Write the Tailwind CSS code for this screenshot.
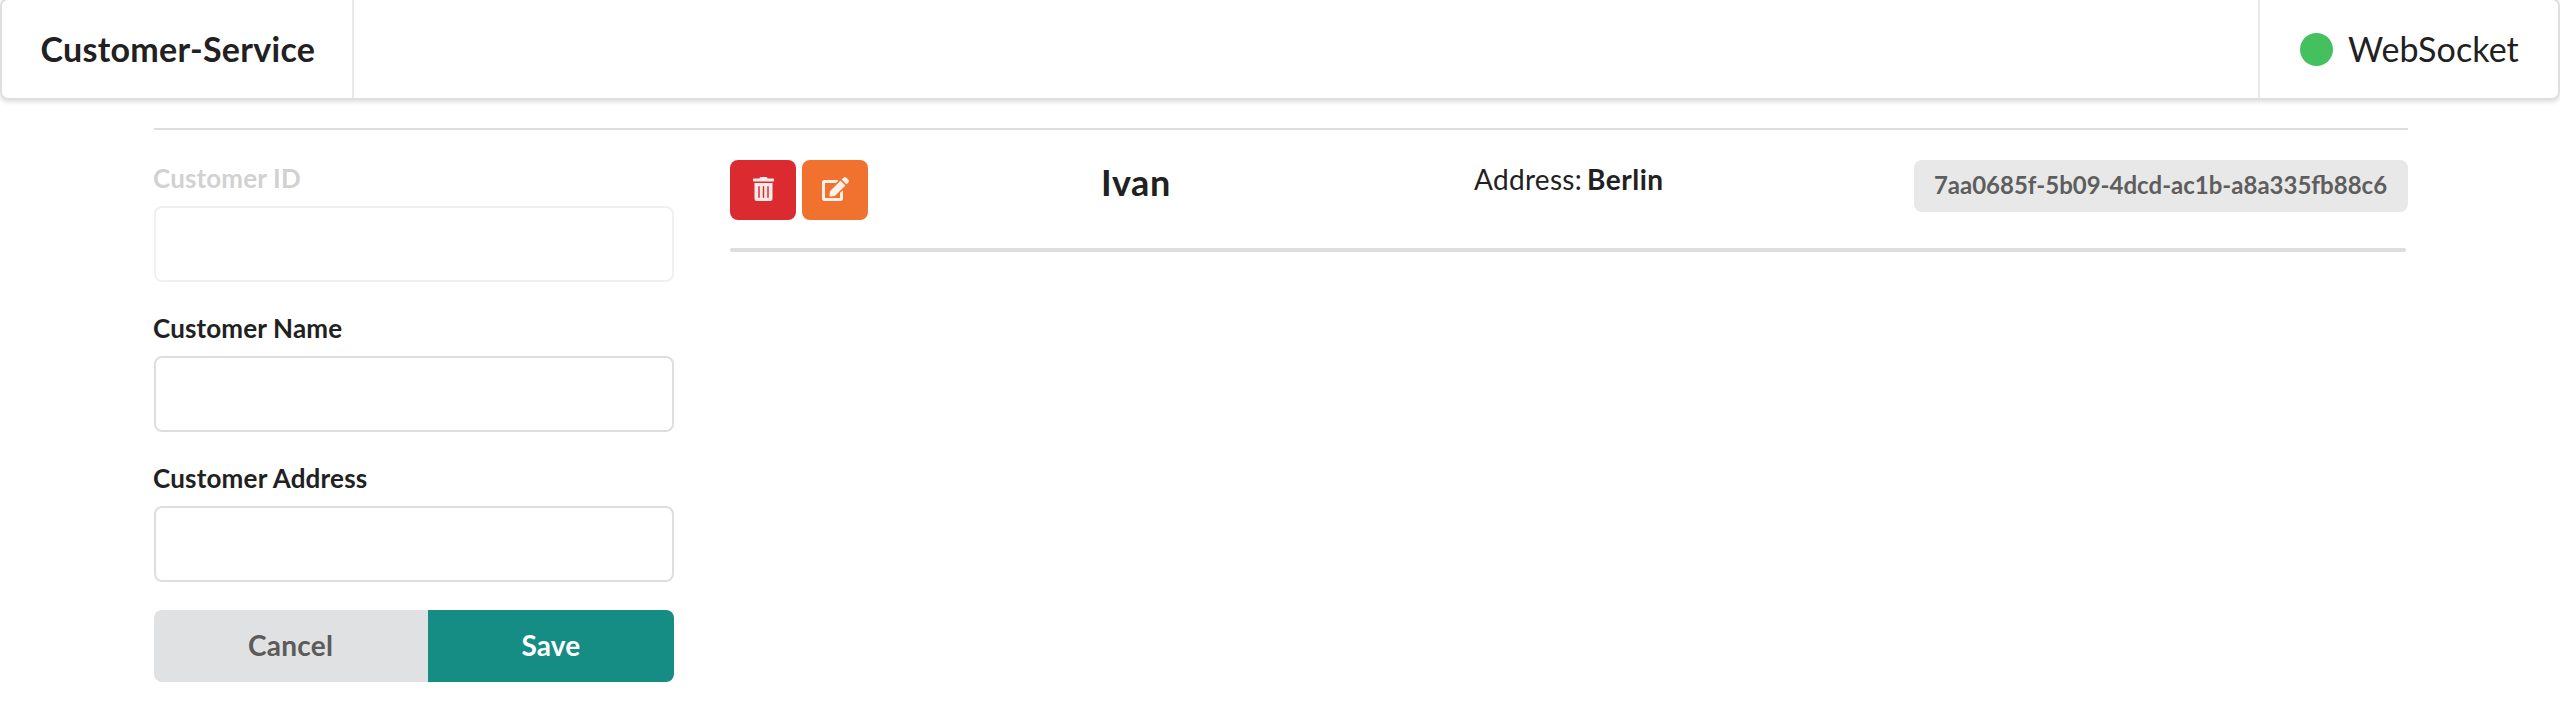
<!DOCTYPE html>
<html lang="en">
<head>
<meta charset="utf-8">
<title>Customer-Service</title>
<script src="https://cdn.jsdelivr.net/npm/@tailwindcss/browser@4"></script>
</head>
<body class="h-[712px] overflow-hidden bg-white font-['Lato',sans-serif] text-[28px] leading-[40px] text-[#212121]">
  <nav class="-mt-0.5 flex h-[102px] rounded-lg border-2 border-[#dededf] shadow-[0_2px_4px_0_rgba(34,36,38,0.15)]">
    <div class="flex w-[352px] items-center border-r-2 border-[#e9e9e9] pl-[38.5px] text-[34px] font-bold tracking-[0.27px]">Customer-Service</div>
    <div class="ml-auto flex w-[300px] items-center border-l-2 border-[#e9e9e9] pl-[39.5px] text-[34px]">
      <span class="mt-px mr-[15.5px] size-[33px] rounded-full bg-[#44c15e]"></span><span class="tracking-[0.1px]">WebSocket</span>
    </div>
  </nav>

  <main class="mt-7 ml-[154px] w-[2254px] border-t-2 border-[#dddddd]">
    <div class="flex pt-[30px]">
      <form class="w-[520px] text-[26px] font-bold tracking-[0.15px]">
        <label class="block opacity-45">
          <span class="-ml-px block h-[46px] leading-[36px]"><span class="opacity-45">Customer ID</span></span>
          <input disabled class="block h-[76px] w-full rounded-lg border-2 border-[#dededf]">
        </label>
        <label class="mt-7 block">
          <span class="-ml-px block h-[46px] leading-[36px]">Customer Name</span>
          <input class="block h-[76px] w-full rounded-lg border-2 border-[#dededf]">
        </label>
        <label class="mt-7 block">
          <span class="-ml-px block h-[46px] leading-[36px] tracking-[0.2px]">Customer Address</span>
          <input class="block h-[76px] w-full rounded-lg border-2 border-[#dededf]">
        </label>
        <div class="mt-7 flex h-[72px] overflow-hidden rounded-lg text-[28px]">
          <button type="button" class="w-[274px] bg-[#e0e1e2] pr-px pb-0.5 tracking-[0.25px] text-[#5b5b5b]">Cancel</button>
          <button type="button" class="flex-1 bg-[#158c84] pb-0.5 text-white">Save</button>
        </div>
      </form>

      <section class="ml-14 flex-1">
        <div class="flex h-[88px] items-start">
          <div class="flex w-[373px] gap-1.5">
            <button type="button" aria-label="Delete" class="flex h-[60px] w-[66px] items-center justify-center rounded-lg bg-[#db2b30] pb-0.5">
              <svg class="h-6 w-[21px] fill-white/90" viewBox="0 0 448 512"><path d="M32 464a48 48 0 0 0 48 48h288a48 48 0 0 0 48-48V128H32zm272-256a16 16 0 0 1 32 0v224a16 16 0 0 1-32 0zm-96 0a16 16 0 0 1 32 0v224a16 16 0 0 1-32 0zm-96 0a16 16 0 0 1 32 0v224a16 16 0 0 1-32 0zM432 32H312l-9.4-18.7A24 24 0 0 0 281.1 0H166.8a23.72 23.72 0 0 0-21.4 13.3L136 32H16A16 16 0 0 0 0 48v32a16 16 0 0 0 16 16h416a16 16 0 0 0 16-16V48a16 16 0 0 0-16-16z"/></svg>
            </button>
            <button type="button" aria-label="Edit" class="flex h-[60px] w-[66px] items-center justify-center rounded-lg bg-[#f1722e] pb-0.5">
              <svg class="h-6 w-[27px] fill-white/90" viewBox="0 0 576 512"><path d="M402.6 83.2l90.2 90.2c3.8 3.8 3.8 10 0 13.8L274.4 405.6l-92.8 10.3c-12.4 1.4-22.9-9.1-21.5-21.5l10.3-92.8L388.8 83.2c3.8-3.8 10-3.8 13.8 0zm162-22.9l-48.8-48.8c-15.2-15.2-39.9-15.2-55.2 0l-35.4 35.4c-3.8 3.8-3.8 10 0 13.8l90.2 90.2c3.8 3.8 10 3.8 13.8 0l35.4-35.4c15.2-15.3 15.2-40 0-55.2zM384 346.2V448H64V128h229.8c3.2 0 6.2-1.3 8.5-3.5l40-40c7.6-7.6 2.2-20.5-8.5-20.5H48C21.5 64 0 85.5 0 112v352c0 26.5 21.5 48 48 48h352c26.5 0 48-21.5 48-48V306.2c0-10.7-12.9-16-20.5-8.5l-40 40c-2.2 2.3-3.5 5.3-3.5 8.5z"/></svg>
            </button>
          </div>
          <h3 class="w-[371px] text-[36px] leading-[44px] font-bold tracking-[0.6px]"><span class="-ml-[2px]">Ivan</span></h3>
          <p class="leading-[38px] tracking-[0.3px]">Address: <b class="-ml-[2.5px] tracking-[0.5px]">Berlin</b></p>
          <span class="ml-auto flex h-[52px] w-[494px] items-center justify-center rounded-lg bg-[#e8e8e8] pr-px pb-[3px] text-[24px] leading-6 font-bold text-[#5e5e5e]">7aa0685f-5b09-4dcd-ac1b-a8a335fb88c6</span>
        </div>
        <hr class="h-1 w-[1676px] rounded-sm border-0 bg-[#dddddd]">
      </section>
    </div>
  </main>
</body>
</html>
